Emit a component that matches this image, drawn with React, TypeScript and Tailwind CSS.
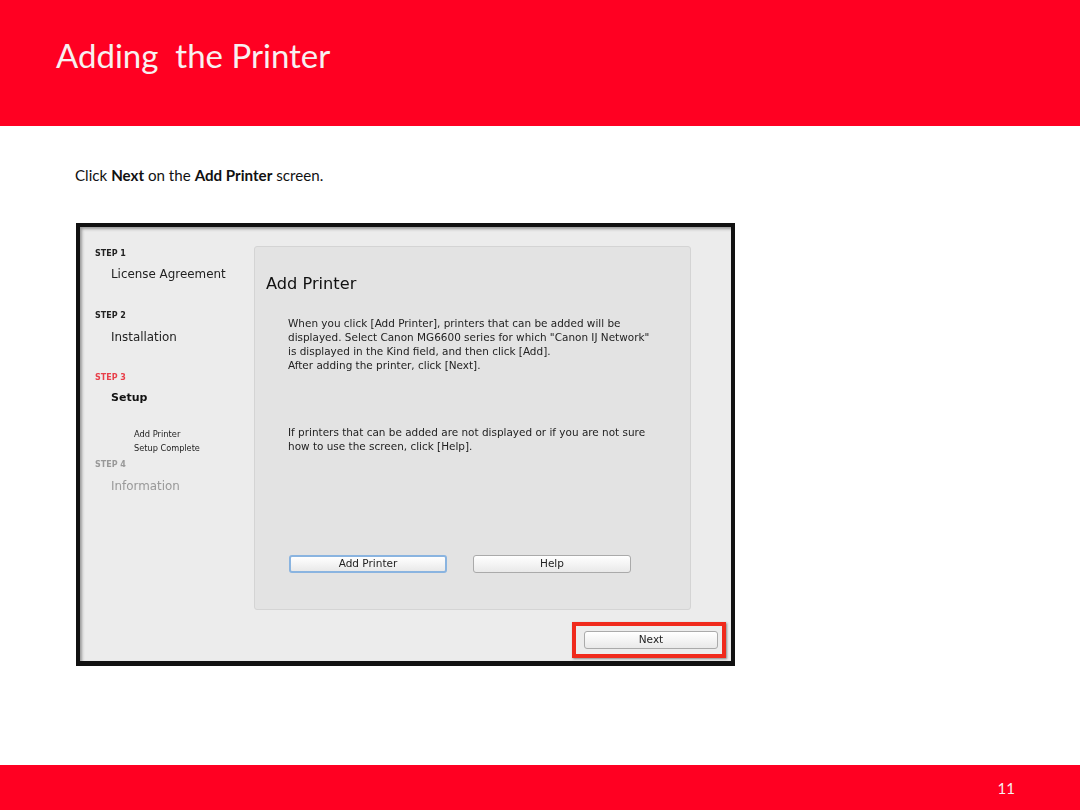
export default function App() {
  const btn = "flex h-[18px] items-center justify-center rounded-[3px] bg-gradient-to-b from-white to-[#e9e9e9] text-[10.5px] text-[#222]";
  return (
    <div className="flex h-[810px] w-[1080px] flex-col bg-white font-['Lato',sans-serif]">
      <header className="h-[126px] bg-[#ff0022] pl-[56px] pt-[34px]">
        <h1 className="text-[33px] leading-[42px] text-[#f8f0f0]">Adding&nbsp; the Printer</h1>
      </header>
      <main className="flex-1 pl-[75px]">
        <p className="mt-[40px] text-[15.15px] leading-[18px] text-[#111]">
          Click <b>Next</b> on the <b>Add Printer</b> screen.
        </p>
        <section className="ml-[1px] mt-[39px] flex h-[443px] w-[659px] flex-col border-[4px] border-b-[5px] border-[#111] bg-[#ececec] font-['DejaVu_Sans',sans-serif] shadow-[inset_2px_2px_3px_#999] blur-[0.3px]">
          <div className="flex">
            <aside className="w-[174px] pl-[15px] pt-[22px] text-[#222]">
              <div className="text-[8px] font-bold leading-[10px]">STEP 1</div>
              <div className="ml-[16px] mt-[8px] text-[11.9px] leading-[14px]">License Agreement</div>
              <div className="mt-[30px] text-[8px] font-bold leading-[10px]">STEP 2</div>
              <div className="ml-[16px] mt-[9px] text-[11.9px] leading-[14px]">Installation</div>
              <div className="mt-[29px] text-[8px] font-bold leading-[10px] text-[#e8404a]">STEP 3</div>
              <div className="ml-[16px] mt-[8px] text-[11px] font-bold leading-[14px] text-[#111]">Setup</div>
              <div className="ml-[39px] mt-[22px] text-[8.3px] leading-[14px]">Add Printer</div>
              <div className="ml-[39px] text-[8.2px] leading-[14px]">Setup Complete</div>
              <div className="mt-[5px] text-[8px] font-bold leading-[10px] text-[#999]">STEP 4</div>
              <div className="ml-[16px] mt-[9px] text-[11.9px] leading-[14px] text-[#999]">Information</div>
            </aside>
            <div className="mt-[19px] h-[364px] w-[437px] rounded-[3px] border border-[#d4d4d4] bg-[#e3e3e3] pl-[11px] pt-[26px]">
              <h2 className="text-[16.2px] leading-[22px] text-[#111]">Add Printer</h2>
              <div className="ml-[22px] mt-[21px] whitespace-nowrap text-[10.46px] leading-[14px] text-[#222]">
                <p>When you click [Add Printer], printers that can be added will be</p>
                <p>displayed. Select Canon MG6600 series for which "Canon IJ Network"</p>
                <p>is displayed in the Kind field, and then click [Add].</p>
                <p>After adding the printer, click [Next].</p>
                <p className="mt-[53px]">If printers that can be added are not displayed or if you are not sure</p>
                <p>how to use the screen, click [Help].</p>
              </div>
              <div className="ml-[23px] mt-[102px] flex gap-[26px]">
                <div className={`${btn} w-[158px] border-2 border-[#8ab4e0]`}>Add Printer</div>
                <div className={`${btn} w-[158px] border border-[#aaa]`}>Help</div>
              </div>
            </div>
          </div>
          <div className="ml-[492px] mt-[12px] flex h-[36px] w-[154px] items-center justify-center border-[4px] border-[#f02a1c] pl-[4px] shadow-[1px_1px_2px_#888]">
            <div className={`${btn} w-[134px] border border-[#aaa]`}>Next</div>
          </div>
        </section>
      </main>
      <footer className="flex h-[45px] items-center justify-end bg-[#ff0022] pr-[65px] pt-[2px] text-[15px] text-[#f8f0f0]">11</footer>
    </div>
  );
}
